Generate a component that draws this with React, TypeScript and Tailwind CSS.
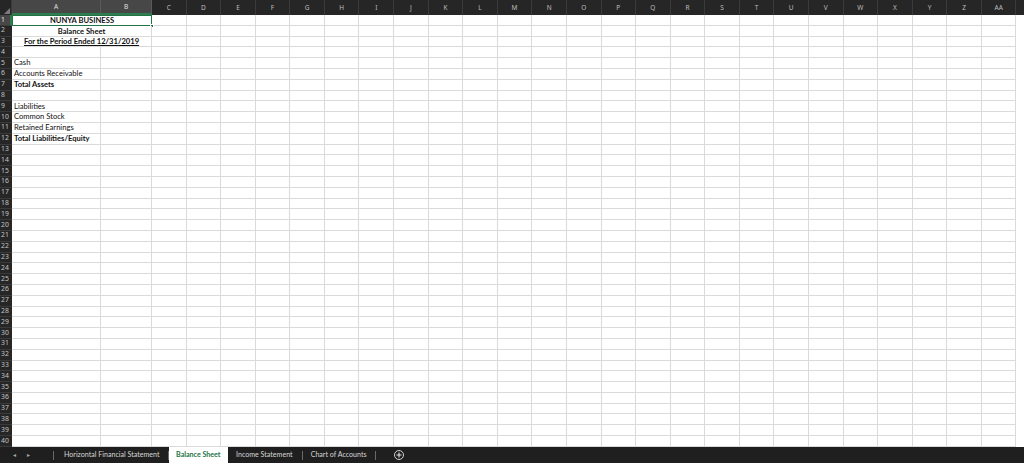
import React from "react";

const COLS = ["C","D","E","F","G","H","I","J","K","L","M","N","O","P","Q","R","S","T","U","V","W","X","Y","Z","AA"];

type Cell = { text: string; bold?: boolean; underline?: boolean; center?: boolean };

const rowsData: Record<number, Cell> = {
  1: { text: "NUNYA BUSINESS", bold: true, center: true },
  2: { text: "Balance Sheet", bold: true, center: true },
  3: { text: "For the Period Ended 12/31/2019", bold: true, underline: true, center: true },
  5: { text: "Cash" },
  6: { text: "Accounts Receivable" },
  7: { text: "Total Assets", bold: true },
  9: { text: "Liabilities" },
  10: { text: "Common Stock" },
  11: { text: "Retained Earnings" },
  12: { text: "Total Liabilities/Equity", bold: true },
};

const gridCols = "grid grid-cols-[12px_89px_51px_repeat(25,34.58px)]";

function HeaderRow() {
  return (
    <div className={`${gridCols} h-[15px] bg-[#262626] text-[6.5px] text-[#bdbdbd] font-['Noto_Sans',sans-serif]`}>
      <div className="relative border-r border-[#3a3a3a]">
        <div className="absolute right-[1px] bottom-[1px] w-0 h-0 border-l-[6px] border-l-transparent border-b-[6px] border-b-[#7a7a7a]" />
      </div>
      <div className="flex items-center justify-center bg-[#474747] border-r border-[#5a5a5a] border-b-2 border-b-[#2e7d4f] text-[#e0e0e0]">A</div>
      <div className="flex items-center justify-center bg-[#474747] border-r border-[#5a5a5a] border-b-2 border-b-[#2e7d4f] text-[#e0e0e0]">B</div>
      {COLS.map((c) => (
        <div key={c} className="flex items-center justify-center border-r border-[#3a3a3a]">{c}</div>
      ))}
    </div>
  );
}

function Row({ n }: { n: number }) {
  const d = rowsData[n];
  const selected = n === 1;
  const textCls = d
    ? `${d.bold ? "font-bold" : ""} ${d.underline ? "underline underline-offset-[1px]" : ""}`
    : "";
  return (
    <div className={`${gridCols} h-[10.8px]`}>
      <div
        className={`flex items-center pl-[1px] text-[6.8px] leading-none border-b border-[#3a3a3a] font-['Noto_Sans',sans-serif] ${
          selected ? "bg-[#474747] text-[#e6e6e6] border-r-2 border-r-[#2e7d4f]" : "bg-[#262626] text-[#c4c4c4]"
        }`}
      >
        {n}
      </div>
      {d && d.center ? (
        <div
          className={`col-span-2 relative flex items-end pb-[0.5px] justify-center whitespace-nowrap text-[7.6px] leading-none text-[#111] ${textCls} ${
            selected ? "border-[1.5px] border-[#217346]" : "border-r border-b border-[#dadada]"
          }`}
        >
          {d.text}
          {selected && (
            <div className="absolute right-[-3px] bottom-[-3px] w-[4px] h-[4px] bg-[#217346] border border-white" />
          )}
        </div>
      ) : (
        <>
          <div className="relative border-r border-b border-[#dadada]">
            {d && (
              <span className={`absolute left-[2px] top-0 bottom-[1px] flex items-end whitespace-nowrap text-[7.6px] leading-none text-[#111] z-10 ${textCls}`}>
                {d.text}
              </span>
            )}
          </div>
          <div className="border-r border-b border-[#dadada]" />
        </>
      )}
      {COLS.map((c) => (
        <div key={c} className="border-r border-b border-[#dadada]" />
      ))}
    </div>
  );
}

function Sep() {
  return <div className="w-px h-[9px] bg-[#6a6a6a]" />;
}

function TabBar() {
  return (
    <div className="h-[16px] bg-[#1f1f1f] flex items-center text-[7.1px] text-[#d6d6d6] leading-none">
      <div className="flex items-center w-[53px] pl-[13px] gap-[11px] text-[#a8a8a8] text-[6px]">
        <span>◂</span>
        <span>▸</span>
      </div>
      <Sep />
      <div className="pl-[10px] pr-[8px]">Horizontal Financial Statement</div>
      <Sep />
      <div className="h-[16px] bg-white text-[#217346] font-bold px-[7.5px] flex items-center">
        Balance Sheet
      </div>
      <div className="pl-[8px] pr-[9px]">Income Statement</div>
      <Sep />
      <div className="px-[8px]">Chart of Accounts</div>
      <Sep />
      <div className="ml-[18px] w-[10px] h-[10px] rounded-full border border-[#d0d0d0] flex items-center justify-center">
        <svg width="6" height="6" viewBox="0 0 6 6">
          <path d="M3 0.5V5.5M0.5 3H5.5" stroke="#e6e6e6" strokeWidth="1.1" />
        </svg>
      </div>
    </div>
  );
}

export default function App() {
  const rows = Array.from({ length: 40 }, (_, i) => i + 1);
  return (
    <div className="w-[1024px] h-[463px] overflow-hidden bg-white flex flex-col font-['Lato','Open_Sans',sans-serif]">
      <div className="flex-1 overflow-hidden">
        <HeaderRow />
        {rows.map((n) => (
          <Row key={n} n={n} />
        ))}
      </div>
      <TabBar />
    </div>
  );
}
